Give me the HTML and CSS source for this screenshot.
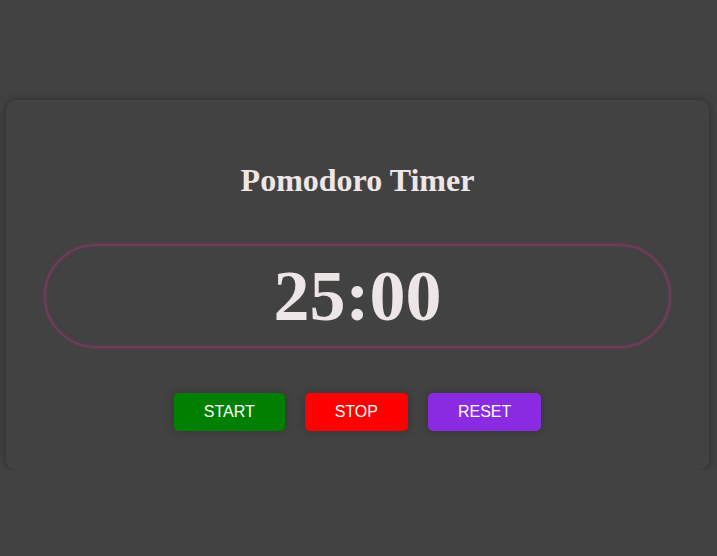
FILE: index.html
```html
<!DOCTYPE html>
<html lang="en">
<head>
<meta charset="utf-8">
<title>Pomodoro Timer</title>
<link rel="stylesheet" href="styles.css">
</head>
<body>
  <div class="card">
    <h1 class="title">Pomodoro Timer</h1>
    <div class="timer">25:00</div>
    <div class="buttons">
      <button class="btn btn-start">START</button>
      <button class="btn btn-stop">STOP</button>
      <button class="btn btn-reset">RESET</button>
    </div>
  </div>
</body>
</html>
```
FILE: styles.css
```css
html, body {
  margin: 0;
  padding: 0;
  background: #424242;
}
body {
  font-family: "Liberation Serif", "Times New Roman", serif;
  padding: 100px 8px 0 6px;
}
.card {
  box-sizing: border-box;
  background: #424242;
  border-radius: 10px;
  box-shadow: 0 0 10px rgba(0, 0, 0, 0.35);
  padding: 40px 38px 39px;
  text-align: center;
}
.title {
  font-size: 32px;
  font-weight: bold;
  color: #efe7e7;
  margin: 22px 0 45px;
  line-height: normal;
}
.timer {
  border: 2px solid #703c58;
  border-radius: 60px;
  box-shadow: 0 0 3px #703c58, inset 0 0 3px rgba(112, 60, 88, 0.6);
  font-size: 72px;
  font-weight: bold;
  color: #ede6e6;
  padding: 9px 0 8px;
  line-height: normal;
}
.buttons {
  display: flex;
  justify-content: center;
  gap: 20px;
  margin-top: 45px;
}
.btn {
  font-family: "Liberation Sans", Arial, sans-serif;
  font-size: 16px;
  color: #ffffff;
  border: none;
  border-radius: 5px;
  padding: 10px 30px;
  line-height: normal;
  box-shadow: 0 0 10px rgba(0, 0, 0, 0.25);
}
.btn-start { background: #008000; }
.btn-stop { background: #ff0000; }
.btn-reset { background: #8a2be2; }
```
